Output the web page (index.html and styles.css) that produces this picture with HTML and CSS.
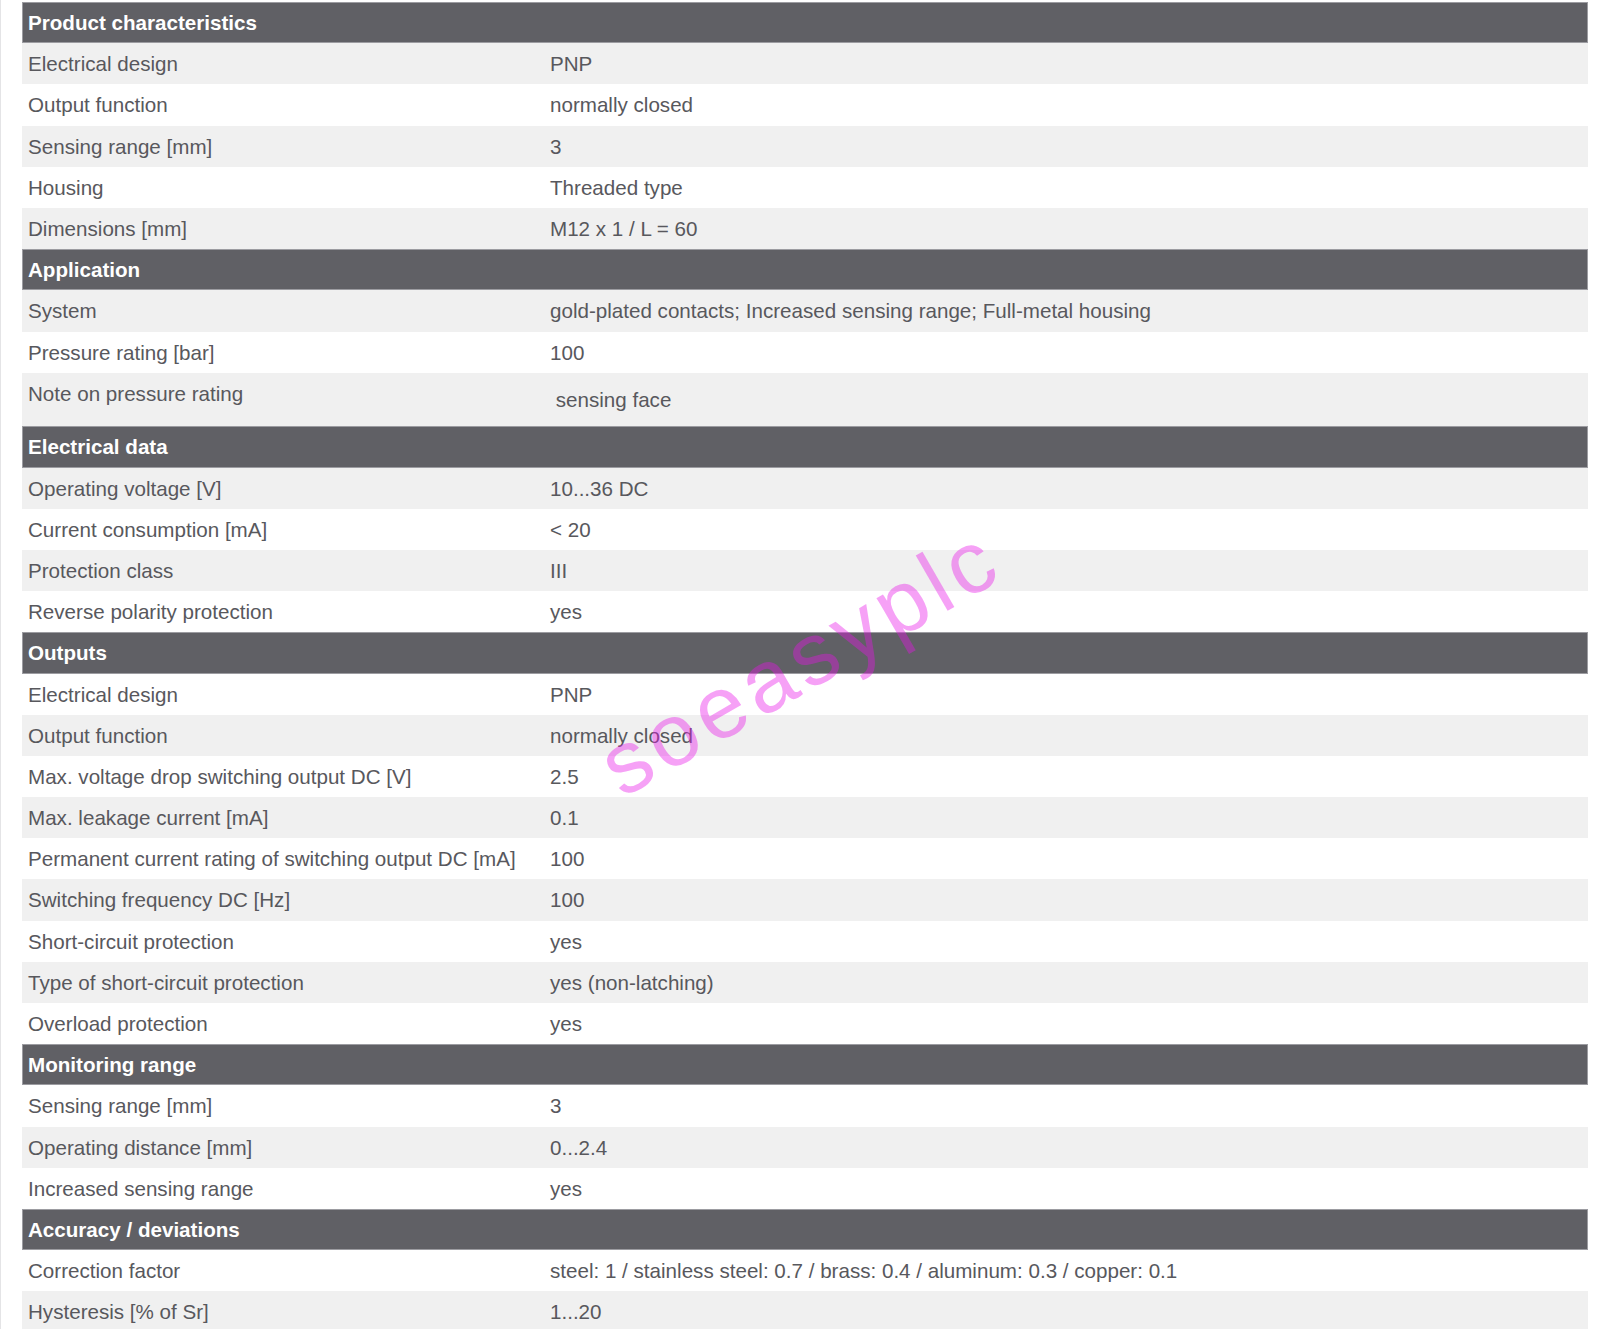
FILE: index.html
```html
<!DOCTYPE html>
<html lang="en">
<head>
<meta charset="utf-8">
<title>Product data sheet</title>
<link rel="stylesheet" href="styles.css">
</head>
<body>
<div class="page">
  <div class="sheet">
    <div class="row head">Product characteristics</div>
    <div class="row"><span class="label">Electrical design</span><span class="value">PNP</span></div>
    <div class="row"><span class="label">Output function</span><span class="value">normally closed</span></div>
    <div class="row"><span class="label">Sensing range [mm]</span><span class="value">3</span></div>
    <div class="row"><span class="label">Housing</span><span class="value">Threaded type</span></div>
    <div class="row"><span class="label">Dimensions [mm]</span><span class="value">M12 x 1 / L = 60</span></div>
    <div class="row head">Application</div>
    <div class="row"><span class="label">System</span><span class="value">gold-plated contacts; Increased sensing range; Full-metal housing</span></div>
    <div class="row"><span class="label">Pressure rating [bar]</span><span class="value">100</span></div>
    <div class="row tall"><span class="label">Note on pressure rating</span><span class="value low">&nbsp;sensing face</span></div>
    <div class="row head">Electrical data</div>
    <div class="row"><span class="label">Operating voltage [V]</span><span class="value">10...36 DC</span></div>
    <div class="row"><span class="label">Current consumption [mA]</span><span class="value">&lt; 20</span></div>
    <div class="row"><span class="label">Protection class</span><span class="value">III</span></div>
    <div class="row"><span class="label">Reverse polarity protection</span><span class="value">yes</span></div>
    <div class="row head">Outputs</div>
    <div class="row"><span class="label">Electrical design</span><span class="value">PNP</span></div>
    <div class="row"><span class="label">Output function</span><span class="value">normally closed</span></div>
    <div class="row"><span class="label">Max. voltage drop switching output DC [V]</span><span class="value">2.5</span></div>
    <div class="row"><span class="label">Max. leakage current [mA]</span><span class="value">0.1</span></div>
    <div class="row"><span class="label">Permanent current rating of switching output DC [mA]</span><span class="value">100</span></div>
    <div class="row"><span class="label">Switching frequency DC [Hz]</span><span class="value">100</span></div>
    <div class="row"><span class="label">Short-circuit protection</span><span class="value">yes</span></div>
    <div class="row"><span class="label">Type of short-circuit protection</span><span class="value">yes (non-latching)</span></div>
    <div class="row"><span class="label">Overload protection</span><span class="value">yes</span></div>
    <div class="row head">Monitoring range</div>
    <div class="row"><span class="label">Sensing range [mm]</span><span class="value">3</span></div>
    <div class="row"><span class="label">Operating distance [mm]</span><span class="value">0...2.4</span></div>
    <div class="row"><span class="label">Increased sensing range</span><span class="value">yes</span></div>
    <div class="row head">Accuracy / deviations</div>
    <div class="row"><span class="label">Correction factor</span><span class="value">steel: 1 / stainless steel: 0.7 / brass: 0.4 / aluminum: 0.3 / copper: 0.1</span></div>
    <div class="row"><span class="label">Hysteresis [% of Sr]</span><span class="value">1...20</span></div>
  </div>
  <div class="watermark">soeasyplc</div>
</div>
</body>
</html>
```
FILE: styles.css
```css
html, body {
  margin: 0;
  padding: 0;
  overflow: hidden;
  background: #ffffff;
}

.page {
  position: relative;
  min-height: 1329px;
  border-left: 1px solid #e4e4e6;
  padding: 2px 12px 0 21px;
  font-family: "Liberation Sans", Arial, sans-serif;
  font-size: 20.6px;
  color: #58585d;
}

.sheet {
  display: flex;
  flex-direction: column;
  width: 1566px;
}

.row {
  display: flex;
  align-items: center;
  box-sizing: border-box;
  height: 41.2px;
  padding-left: 6px;
  line-height: 41.2px;
  white-space: nowrap;
  background: #ffffff;
}

.row:nth-child(even) {
  background: #f0f0f0;
}

.row.head {
  background: #606065;
  border: 1px solid #9c9ca1;
  color: #ffffff;
  font-weight: bold;
  padding-left: 5px;
}

.label {
  width: 522px;
  flex: none;
}

.value {
  flex: 1;
}

.row.tall {
  height: 53.7px;
  align-items: flex-start;
}

.value.low {
  padding-top: 6px;
}

.watermark {
  position: absolute;
  left: 799px;
  top: 672px;
  transform: translate(-50%, -62%) rotate(-30deg);
  font-family: "Liberation Sans", Arial, sans-serif;
  font-size: 88px;
  letter-spacing: 6px;
  line-height: 1;
  color: rgba(232, 20, 232, 0.4);
  white-space: nowrap;
  pointer-events: none;
}
```
